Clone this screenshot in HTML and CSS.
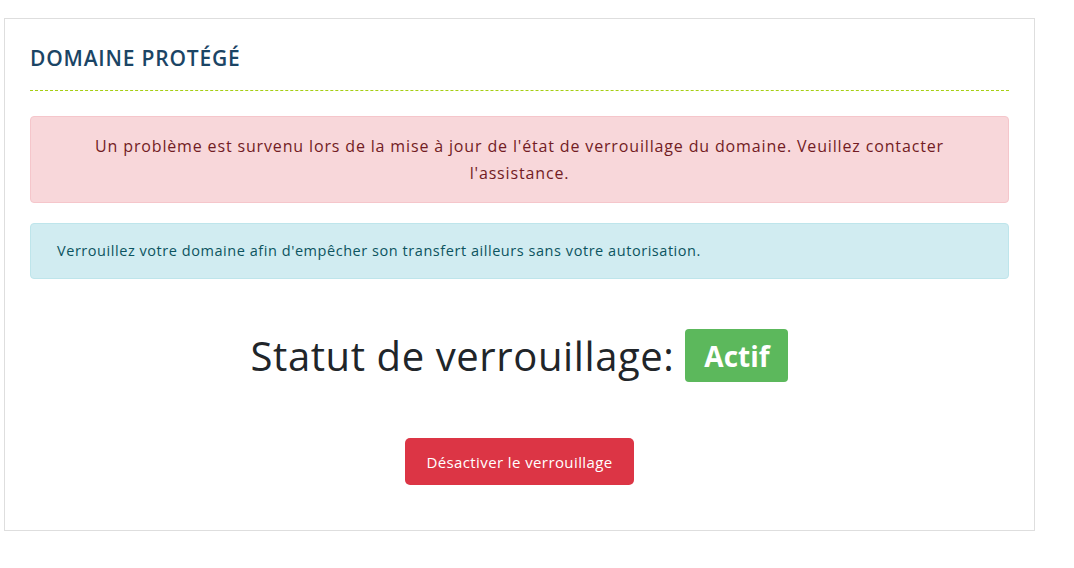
FILE: index.html
```html
<!DOCTYPE html>
<html lang="fr">
<head>
<meta charset="utf-8">
<title>Domaine protégé</title>
<link rel="stylesheet" href="styles.css">
</head>
<body>
<div class="card">
  <div class="card-header">
    <h2 class="card-title">DOMAINE PROTÉGÉ</h2>
  </div>
  <div class="alert alert-danger">Un problème est survenu lors de la mise à jour de l'état de verrouillage du domaine. Veuillez contacter l'assistance.</div>
  <div class="alert alert-info">Verrouillez votre domaine afin d'empêcher son transfert ailleurs sans votre autorisation.</div>
  <div class="status">
    <span class="status-label">Statut de verrouillage:</span>
    <span class="badge">Actif</span>
  </div>
  <div class="actions">
    <button class="btn-danger" type="button">Désactiver le verrouillage</button>
  </div>
</div>
</body>
</html>
```

FILE: styles.css
```css
* { box-sizing: border-box; }
html, body { background: #fff; }
body {
  margin: 0;
  font-family: "Open Sans", "Noto Sans", sans-serif;
  color: #212529;
}
.card {
  margin: 18px 0 0 4px;
  width: 1031px;
  border: 1px solid #dedede;
  background: #fff;
  padding: 26px 25px 45px;
}
.card-header {
  border-bottom: 1px dashed #a6cf14;
  padding-bottom: 19px;
}
.card-title {
  margin: 0;
  font-size: 21px;
  line-height: 26px;
  font-weight: 600;
  letter-spacing: 0.8px;
  color: #1b4565;
}
.alert {
  border: 1px solid transparent;
  border-radius: 4px;
}
.alert-danger {
  margin-top: 25px;
  background: #f8d7da;
  border-color: #f5c6cb;
  color: #721c24;
  text-align: center;
  font-size: 16px;
  line-height: 26.5px;
  letter-spacing: 0.85px;
  padding: 16px 60px;
}
.alert-info {
  margin-top: 20px;
  background: #d1ecf1;
  border-color: #bee5eb;
  color: #0c5460;
  font-size: 14.5px;
  line-height: 22px;
  letter-spacing: 0.55px;
  padding: 16px 26px;
}
.status {
  margin-top: 50px;
  display: flex;
  justify-content: center;
  align-items: center;
  gap: 11px;
  height: 53px;
}
.status-label {
  font-size: 40px;
  line-height: 48px;
  color: #212529;
  letter-spacing: 0.6px;
}
.badge {
  display: inline-flex;
  align-items: center;
  justify-content: center;
  width: 103px;
  height: 53px;
  background: #5cb85c;
  color: #fff;
  font-weight: 700;
  font-size: 28px;
  border-radius: 4px;
}
.actions {
  margin-top: 56px;
  display: flex;
  justify-content: center;
}
.btn-danger {
  width: 229px;
  height: 47px;
  background: #dc3545;
  border: none;
  border-radius: 5px;
  color: #fff;
  font-family: inherit;
  font-size: 15px;
  letter-spacing: 0.4px;
}
```
